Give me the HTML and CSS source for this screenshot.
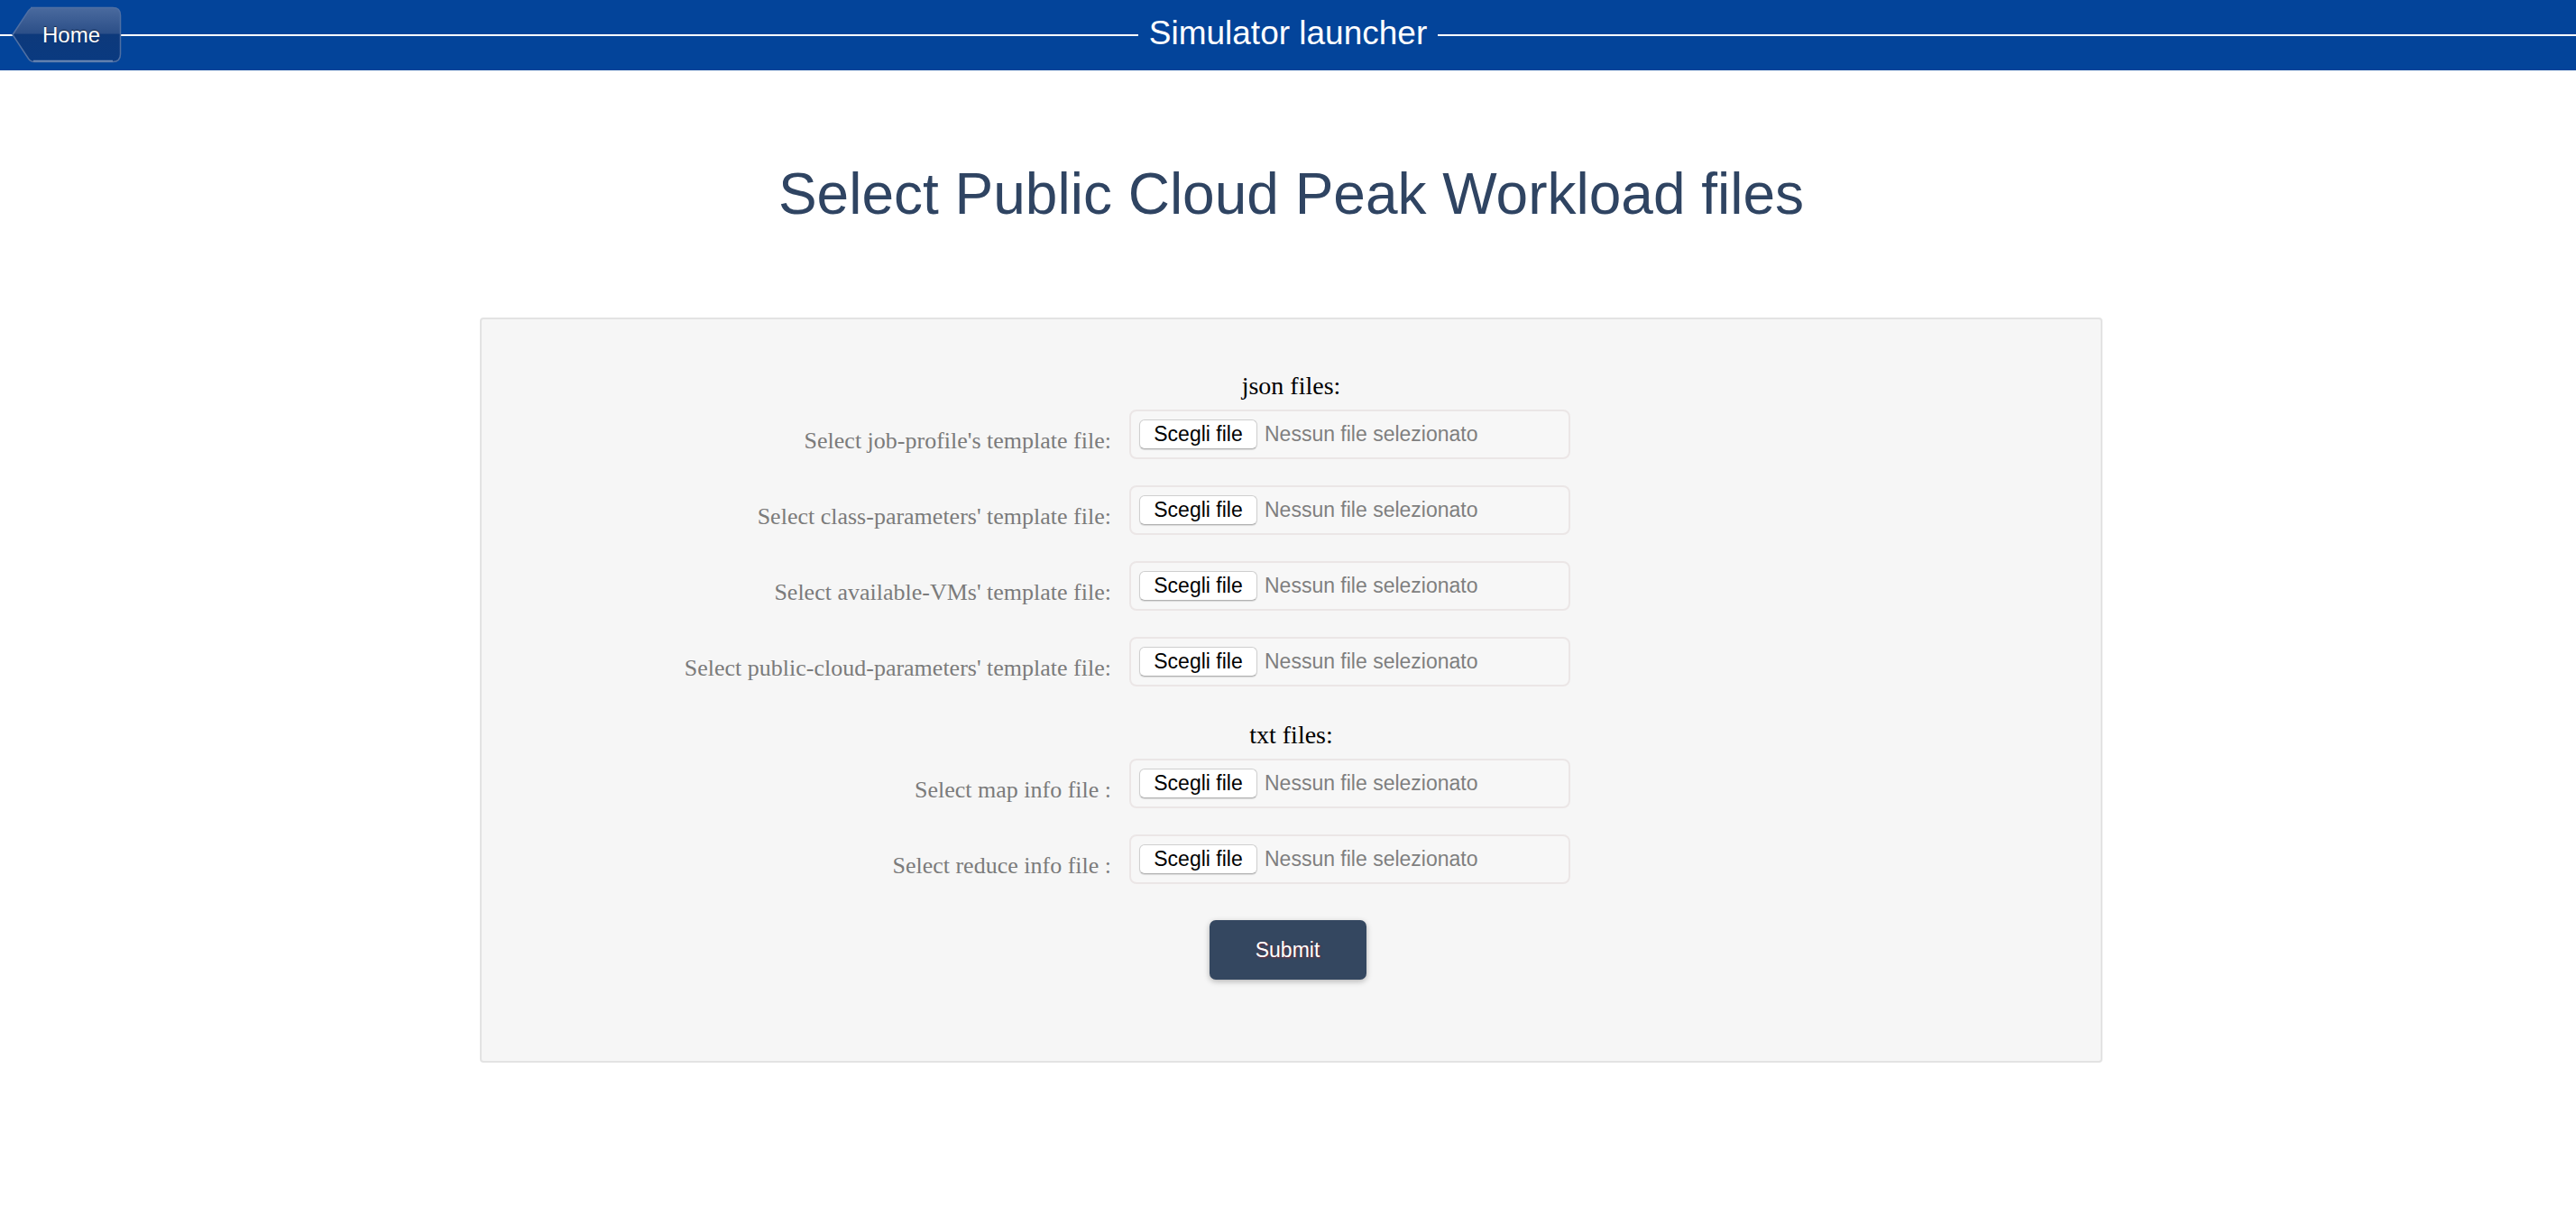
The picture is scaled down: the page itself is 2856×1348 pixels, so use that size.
FILE: index.html
```html
<!DOCTYPE html>
<html lang="it">
<head>
<meta charset="utf-8">
<title>Simulator launcher</title>
<link rel="stylesheet" href="styles.css">
</head>
<body>
<header class="topbar">
  <a class="home-btn" href="#">
    <svg class="home-shape" viewBox="0 0 122 63" width="122" height="63" aria-hidden="true">
      <defs>
        <linearGradient id="homeGrad" x1="0" y1="0" x2="0" y2="1">
          <stop offset="0" stop-color="#4a6a9e"/>
          <stop offset="0.47" stop-color="#2c4f88"/>
          <stop offset="0.5" stop-color="#0d397b"/>
          <stop offset="1" stop-color="#0a3a80"/>
        </linearGradient>
      </defs>
      <path d="M21 1.5 H112 Q120.5 1.5 120.5 10 V53 Q120.5 61.5 112 61.5 H25 Q21 61.5 18.5 58 L1 31.5 L18.5 5 Q21 1.5 25 1.5 Z" fill="url(#homeGrad)" stroke="#4f6fa3" stroke-width="1.5"/>
      <path d="M24 60.5 H112" stroke="#6f8cb8" stroke-width="1.5" fill="none"/>
    </svg>
    <span class="home-label">Home</span>
  </a>
  <span class="rule"></span>
  <span class="topbar-title">Simulator launcher</span>
  <span class="rule"></span>
</header>

<main class="main">
  <h1 class="page-title">Select Public Cloud Peak Workload files</h1>

  <form class="panel" onsubmit="return false;">
    <section class="group">
      <h3 class="group-title">json files:</h3>
      <div class="field-list">
        <div class="field">
          <label class="field-label">Select job-profile's template file:</label>
          <div class="file-box"><span class="file-btn">Scegli file</span><span class="file-status">Nessun file selezionato</span></div>
        </div>
        <div class="field">
          <label class="field-label">Select class-parameters' template file:</label>
          <div class="file-box"><span class="file-btn">Scegli file</span><span class="file-status">Nessun file selezionato</span></div>
        </div>
        <div class="field">
          <label class="field-label">Select available-VMs' template file:</label>
          <div class="file-box"><span class="file-btn">Scegli file</span><span class="file-status">Nessun file selezionato</span></div>
        </div>
        <div class="field">
          <label class="field-label">Select public-cloud-parameters' template file:</label>
          <div class="file-box"><span class="file-btn">Scegli file</span><span class="file-status">Nessun file selezionato</span></div>
        </div>
      </div>
    </section>

    <section class="group group-next">
      <h3 class="group-title">txt files:</h3>
      <div class="field-list">
        <div class="field">
          <label class="field-label">Select map info file :</label>
          <div class="file-box"><span class="file-btn">Scegli file</span><span class="file-status">Nessun file selezionato</span></div>
        </div>
        <div class="field">
          <label class="field-label">Select reduce info file :</label>
          <div class="file-box"><span class="file-btn">Scegli file</span><span class="file-status">Nessun file selezionato</span></div>
        </div>
      </div>
    </section>

    <div class="actions">
      <button class="submit-btn" type="submit">Submit</button>
    </div>
  </form>
</main>
</body>
</html>
```

FILE: styles.css
```css
* { box-sizing: border-box; }

html, body {
  margin: 0;
  padding: 0;
  background: #ffffff;
}

body {
  font-family: "Liberation Sans", Arial, sans-serif;
}

/* ---------- top bar ---------- */
.topbar {
  position: relative;
  display: flex;
  align-items: center;
  height: 78px;
  background: #03449a;
}

.rule {
  flex: 1;
  height: 2px;
  background: #ffffff;
}

.topbar-title {
  padding: 0 12px 4px;
  font-size: 37px;
  line-height: 42px;
  color: #ffffff;
  white-space: nowrap;
}

.home-btn {
  position: absolute;
  left: 13px;
  top: 7px;
  width: 122px;
  height: 63px;
  display: flex;
  align-items: center;
  text-decoration: none;
}

.home-shape {
  position: absolute;
  left: 0;
  top: 0;
}

.home-label {
  position: relative;
  padding-left: 34px;
  font-size: 24px;
  line-height: 63px;
  color: #ffffff;
  text-shadow: 0 -1px 1px rgba(0, 0, 0, 0.55);
}

/* ---------- main ---------- */
.main {
  padding-left: 7px;
}

.page-title {
  margin: 101px 0 0;
  text-align: center;
  font-family: "Liberation Sans", Arial, sans-serif;
  font-weight: 400;
  font-size: 64px;
  line-height: 73px;
  color: #2f4462;
}

.panel {
  width: 1799px;
  margin: 100px auto 0;
  padding: 54px 0 90px;
  background: #f6f6f6;
  border: 2px solid #e3e3e3;
  border-radius: 4px;
}

.group-next {
  margin-top: 34px;
}

.group-title {
  margin: 0 0 6px;
  text-align: center;
  font-family: "Liberation Serif", "Times New Roman", serif;
  font-weight: 400;
  font-size: 28px;
  line-height: 40px;
  color: #000000;
}

.field-list {
  display: grid;
  row-gap: 29px;
}

.field {
  display: grid;
  grid-template-columns: 698px 489px;
  column-gap: 20px;
  align-items: start;
}

.field-label {
  padding-top: 20px;
  text-align: right;
  font-family: "Liberation Serif", "Times New Roman", serif;
  font-size: 26px;
  line-height: 30px;
  color: #7b7b7b;
  white-space: nowrap;
}

.file-box {
  display: flex;
  align-items: center;
  height: 55px;
  padding: 0 9px;
  background: #f7f7f7;
  border: 2px solid #ebe6e6;
  border-radius: 8px;
}

.file-btn {
  display: flex;
  align-items: center;
  justify-content: center;
  width: 131px;
  height: 33px;
  background: #ffffff;
  border: 1px solid #cfcfcf;
  border-bottom-color: #b2b2b2;
  border-radius: 6px;
  box-shadow: 0 1px 1px rgba(0, 0, 0, 0.12);
  font-size: 23px;
  color: #000000;
}

.file-status {
  margin-left: 8px;
  font-size: 23px;
  color: #7f7f7f;
  white-space: nowrap;
}

.actions {
  display: flex;
  justify-content: center;
  margin-top: 40px;
  padding-right: 8px;
}

.submit-btn {
  width: 174px;
  height: 66px;
  border: none;
  border-radius: 7px;
  background: #344760;
  color: #ffffff;
  font-family: "Liberation Sans", Arial, sans-serif;
  font-size: 23px;
  text-shadow: 1px 1px 2px rgba(150, 30, 40, 0.7);
  box-shadow: 0 2px 6px rgba(0, 0, 0, 0.28);
  cursor: pointer;
}
```
